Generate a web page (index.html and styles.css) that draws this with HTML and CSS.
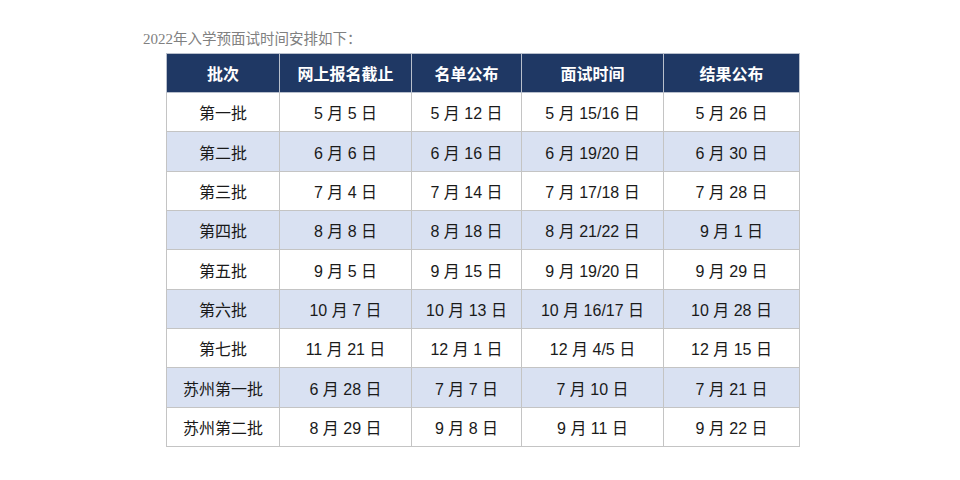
FILE: index.html
```html
<!DOCTYPE html>
<html lang="zh">
<head>
<meta charset="utf-8">
<link rel="stylesheet" href="styles.css">
</head>
<body>
<div class="page">
  <p class="intro"><span class="num">2022</span>年入学预面试时间安排如下：</p>
  <table class="sched">
    <colgroup>
      <col class="c1"><col class="c2"><col class="c3"><col class="c4"><col class="c5">
    </colgroup>
    <thead>
      <tr><th>批次</th><th>网上报名截止</th><th>名单公布</th><th>面试时间</th><th>结果公布</th></tr>
    </thead>
    <tbody>
      <tr><td>第一批</td><td>5 月 5 日</td><td>5 月 12 日</td><td>5 月 15/16 日</td><td>5 月 26 日</td></tr>
      <tr class="alt"><td>第二批</td><td>6 月 6 日</td><td>6 月 16 日</td><td>6 月 19/20 日</td><td>6 月 30 日</td></tr>
      <tr><td>第三批</td><td>7 月 4 日</td><td>7 月 14 日</td><td>7 月 17/18 日</td><td>7 月 28 日</td></tr>
      <tr class="alt"><td>第四批</td><td>8 月 8 日</td><td>8 月 18 日</td><td>8 月 21/22 日</td><td>9 月 1 日</td></tr>
      <tr><td>第五批</td><td>9 月 5 日</td><td>9 月 15 日</td><td>9 月 19/20 日</td><td>9 月 29 日</td></tr>
      <tr class="alt"><td>第六批</td><td>10 月 7 日</td><td>10 月 13 日</td><td>10 月 16/17 日</td><td>10 月 28 日</td></tr>
      <tr><td>第七批</td><td>11 月 21 日</td><td>12 月 1 日</td><td>12 月 4/5 日</td><td>12 月 15 日</td></tr>
      <tr class="alt"><td>苏州第一批</td><td>6 月 28 日</td><td>7 月 7 日</td><td>7 月 10 日</td><td>7 月 21 日</td></tr>
      <tr><td>苏州第二批</td><td>8 月 29 日</td><td>9 月 8 日</td><td>9 月 11 日</td><td>9 月 22 日</td></tr>
    </tbody>
  </table>
</div>
</body>
</html>
```

FILE: styles.css
```css
html, body {
  margin: 0;
  padding: 0;
  background: #ffffff;
}
.page {
  padding: 29px 0 0 143px;
}
.intro {
  margin: 0;
  height: 18px;
  line-height: 18px;
  font-size: 14.5px;
  color: #808080;
  font-family: "Noto Sans CJK SC", sans-serif;
}
.intro .num {
  font-family: "Liberation Serif", serif;
  font-size: 15px;
}
.sched {
  margin: 6px 0 0 23px;
  border-collapse: collapse;
  table-layout: fixed;
  width: 633px;
  font-family: "Liberation Sans", "Noto Sans CJK SC", sans-serif;
  font-size: 16px;
  color: #1a1a1a;
}
.c1 { width: 113px; }
.c2 { width: 132px; }
.c3 { width: 110px; }
.c4 { width: 142px; }
.c5 { width: 136px; }
.sched th, .sched td {
  border: 1px solid #c4c4c4;
  text-align: center;
  padding: 0;
  height: 38px;
}
.sched th {
  background: #1f3864;
  color: #ffffff;
  font-weight: 700;
  font-family: "Noto Sans CJK SC", sans-serif;
  font-size: 16px;
  border-color: #b8bfcc;
}
.sched tbody tr { height: 39.35px; }
.sched td:first-child {
  font-family: "Noto Sans CJK SC", sans-serif;
  font-size: 16px;
}
.sched tr.alt td {
  background: #d9e1f2;
}
```
